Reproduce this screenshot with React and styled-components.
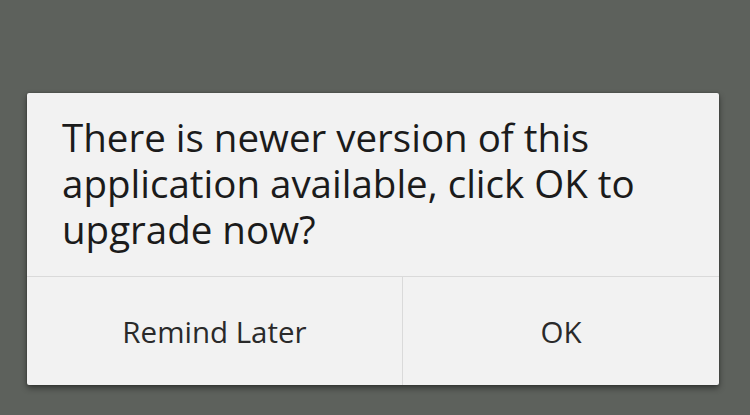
import React from "react";
import styled, { createGlobalStyle } from "styled-components";

const GlobalStyle = createGlobalStyle`
  html, body {
    margin: 0;
    padding: 0;
    background: #5d615c;
  }
  body {
    font-family: "Open Sans", "Noto Sans", "Liberation Sans", sans-serif;
  }
`;

const Screen = styled.div`
  width: 750px;
  height: 415px;
  padding: 93px 31px 0 27px;
  box-sizing: border-box;
`;

const Dialog = styled.div`
  width: 692px;
  height: 292px;
  background: #f2f2f2;
  border-radius: 2px;
  display: flex;
  flex-direction: column;
  box-shadow: 0 3px 6px rgba(0, 0, 0, 0.45), 0 0 2px rgba(0, 0, 0, 0.3);
`;

const Message = styled.p`
  margin: 0;
  height: 184px;
  box-sizing: border-box;
  padding: 21px 10px 0 35px;
  font-size: 38.5px;
  line-height: 46px;
  color: #1b1b1b;
  border-bottom: 1px solid #dadada;
`;

const Actions = styled.div`
  flex: 1;
  display: grid;
  grid-template-columns: 375px 1fr;
`;

const Action = styled.button`
  border: none;
  background: transparent;
  font-family: inherit;
  font-size: 29.5px;
  color: #2a2a2a;
  padding: 0;
  cursor: pointer;
  border-left: ${(p) => (p.$divider ? "1px solid #dadada" : "none")};
`;

export default function App() {
  return (
    <>
      <GlobalStyle />
      <Screen>
        <Dialog>
          <Message>
            There is newer version of this application available, click OK to
            upgrade now?
          </Message>
          <Actions>
            <Action>Remind Later</Action>
            <Action $divider>OK</Action>
          </Actions>
        </Dialog>
      </Screen>
    </>
  );
}
